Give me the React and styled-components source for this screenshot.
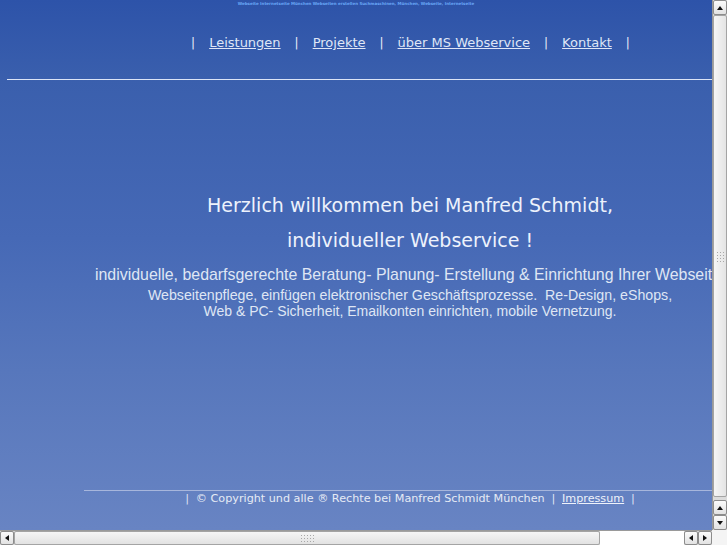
import React from "react";
import styled, { createGlobalStyle } from "styled-components";

const Global = createGlobalStyle`
  html, body {
    margin: 0;
    padding: 0;
    background: #ffffff;
  }
  body {
    font-family: "DejaVu Sans", Verdana, sans-serif;
  }
`;

const navItems = ["Leistungen", "Projekte", "über MS Webservice", "Kontakt"];

function App() {
  return (
    <>
      <Global />
      <Frame>
        <Viewport>
          <Canvas>
            <Keywords>
              Webseite Internetseite München Webseiten erstellen Suchmaschinen, München, Webseite, Internetseite
            </Keywords>
            <Nav>
              <Sep>|</Sep>
              {navItems.map((item) => (
                <React.Fragment key={item}>
                  <NavLink href="#">{item}</NavLink>
                  <Sep>|</Sep>
                </React.Fragment>
              ))}
            </Nav>
            <Rule $left={7} $top={28} />
            <Welcome>
              <Headline>Herzlich willkommen bei Manfred Schmidt,</Headline>
              <Headline>individueller Webservice !</Headline>
              <Lead>
                individuelle, bedarfsgerechte Beratung- Planung- Erstellung &amp; Einrichtung Ihrer Webseite
              </Lead>
              <Small $top={2} $size={14.2}>
                Webseitenpflege, einfügen elektronischer Geschäftsprozesse.&nbsp; Re-Design, eShops,
              </Small>
              <Small $size={14}>Web &amp; PC- Sicherheit, Emailkonten einrichten, mobile Vernetzung.</Small>
            </Welcome>
            <Rule $left={84} $top={171} $muted />
            <Footer>
              <Sep $small>|</Sep>© Copyright und alle ® Rechte bei Manfred Schmidt München
              <Sep $small>|</Sep>
              <FootLink href="#">Impressum</FootLink>
              <Sep $small>|</Sep>
            </Footer>
          </Canvas>
        </Viewport>

        <VBar>
          <Arrow $dir="up" />
          <VThumb>
            <Grip $cols={3} $rows={4} />
          </VThumb>
          <VGap />
          <Arrow $dir="up" />
          <Arrow $dir="down" />
        </VBar>

        <HBar>
          <Arrow $dir="left" />
          <HThumb>
            <Grip $cols={5} $rows={3} />
          </HThumb>
          <HTrack />
          <Arrow $dir="left" />
          <Arrow $dir="right" />
        </HBar>
        <Corner />
      </Frame>
    </>
  );
}

const Frame = styled.div`
  width: 727px;
  height: 545px;
  display: grid;
  grid-template-columns: 712px 15px;
  grid-template-rows: 530px 15px;
  overflow: hidden;
`;

const Viewport = styled.div`
  overflow: hidden;
  background: linear-gradient(180deg, #2d53a9 0%, #3a5fad 15%, #4669b6 45%, #5777bc 70%, #6884c3 100%);
`;

const Canvas = styled.div`
  width: 820px;
  color: #e4eaf7;
`;

const Keywords = styled.div`
  width: 712px;
  text-align: center;
  font-family: "DejaVu Sans", sans-serif;
  font-weight: bold;
  font-size: 4px;
  line-height: 7px;
  color: #69a6f6;
  white-space: nowrap;
`;

const Nav = styled.div`
  margin-top: 28px;
  text-align: center;
  font-size: 13px;
  line-height: 16px;
  white-space: nowrap;
  padding-left: 1px;
`;

const Sep = styled.span`
  display: inline-block;
  margin: 0 ${(p) => (p.$small ? 7 : 14)}px;
  font-size: ${(p) => (p.$small ? 10 : 12)}px;
  color: #e8edf8;
`;

const NavLink = styled.a`
  color: #dfe6f6;
  text-decoration: underline;
`;

const Rule = styled.div`
  margin-top: ${(p) => p.$top}px;
  margin-left: ${(p) => p.$left}px;
  height: 1px;
  background: ${(p) => (p.$muted ? "#a7b6dc" : "#dce4f6")};
`;

const Welcome = styled.div`
  margin-top: 108px;
  text-align: center;
  white-space: nowrap;
`;

const Headline = styled.div`
  font-size: 19px;
  line-height: 35px;
  color: #edf2fc;
`;

const Lead = styled.div`
  font-family: "Liberation Sans", Arial, sans-serif;
  font-size: 15.9px;
  line-height: 20px;
  margin-top: 7px;
  padding-right: 4px;
  color: #dfe6f4;
`;

const Small = styled.div`
  font-family: "Liberation Sans", Arial, sans-serif;
  font-size: ${(p) => p.$size}px;
  line-height: 16px;
  margin-top: ${(p) => p.$top || 0}px;
  color: #dfe6f4;
`;

const Footer = styled.div`
  margin-top: 1px;
  text-align: center;
  font-size: 11.2px;
  line-height: 14px;
  white-space: nowrap;
  color: #e6ebf5;
`;

const FootLink = styled.a`
  color: #eef2fa;
  text-decoration: underline;
`;

const VBar = styled.div`
  grid-column: 2;
  grid-row: 1;
  display: flex;
  flex-direction: column;
  background: #d8d8d8;
  border-left: 1px solid #9a9a9a;
  box-sizing: border-box;
`;

const HBar = styled.div`
  grid-column: 1;
  grid-row: 2;
  display: flex;
  background: #d8d8d8;
  border-top: 1px solid #9a9a9a;
  box-sizing: border-box;
`;

const Corner = styled.div`
  grid-column: 2;
  grid-row: 2;
  background: #f4f4f4;
`;

const Arrow = styled.div`
  flex: 0 0 ${(p) => (p.$dir === "up" || p.$dir === "down" ? 15 : 14)}px;
  ${(p) => (p.$dir === "up" || p.$dir === "down" ? "height: 15px;" : "width: 14px;")}
  box-sizing: border-box;
  border: 1px solid #8c8c8c;
  border-radius: 2px;
  background: linear-gradient(180deg, #fbfbfb, #e2e2e2);
  display: flex;
  align-items: center;
  justify-content: center;
  &::after {
    content: "";
    width: 0;
    height: 0;
    ${(p) =>
      p.$dir === "up"
        ? "border-left: 3px solid transparent; border-right: 3px solid transparent; border-bottom: 4px solid #111;"
        : p.$dir === "down"
        ? "border-left: 3px solid transparent; border-right: 3px solid transparent; border-top: 4px solid #111;"
        : p.$dir === "left"
        ? "border-top: 3px solid transparent; border-bottom: 3px solid transparent; border-right: 4px solid #111;"
        : "border-top: 3px solid transparent; border-bottom: 3px solid transparent; border-left: 4px solid #111;"}
  }
`;

const VThumb = styled.div`
  flex: 0 0 482px;
  box-sizing: border-box;
  border: 1px solid #a4a4a4;
  border-radius: 2px;
  background: linear-gradient(90deg, #f6f6f6, #e4e4e4);
  display: flex;
  align-items: center;
  justify-content: center;
`;

const VGap = styled.div`
  flex: 1;
  background: #dcdcdc;
`;

const HThumb = styled.div`
  flex: 0 0 586px;
  box-sizing: border-box;
  border: 1px solid #a4a4a4;
  border-radius: 2px;
  background: linear-gradient(180deg, #f6f6f6, #e2e2e2);
  display: flex;
  align-items: center;
  justify-content: center;
`;

const HTrack = styled.div`
  flex: 1;
  background-color: #ffffff;
  background-image: radial-gradient(#e4e4e4 1px, transparent 1px);
  background-size: 8px 4px;
`;

const Grip = styled.div`
  width: ${(p) => p.$cols * 3 - 1}px;
  height: ${(p) => p.$rows * 3 - 1}px;
  background-image: radial-gradient(circle, #a8a8a8 0.8px, transparent 1px);
  background-size: 3px 3px;
`;

export default App;
